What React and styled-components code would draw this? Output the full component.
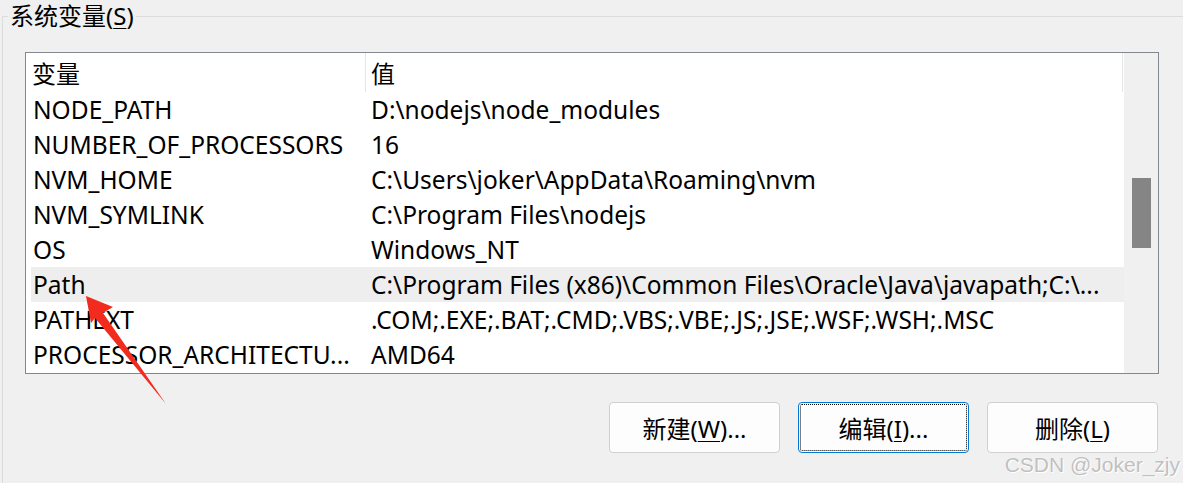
import React from 'react';
import styled, { createGlobalStyle } from 'styled-components';

const GlobalStyle = createGlobalStyle`
  html, body { margin: 0; padding: 0; background: #f0f0f0; }
  body { font-family: "Noto Sans", "Noto Sans CJK SC", sans-serif; color: #000; }
`

const Page = styled.div`
  position: relative;
  width: 1183px;
  height: 483px;
  overflow: hidden;
  background: #f0f0f0;
`

const Group = styled.fieldset`
  margin: 0 0 0 2px;
  padding: 0;
  width: 1300px;
  min-height: 600px;
  border: 1px solid #dcdcdc;
  border-right: none;
  border-bottom: none;
`

const Legend = styled.legend`
  margin-left: 5px;
  padding: 0 2px;
  font-size: 24px;
  line-height: 32px;
`

const Key = styled.span`
  text-decoration: underline;
  text-underline-offset: 3px;
  text-decoration-thickness: 1px;
`

const Content = styled.div`
  margin: 20px 0 0 22px;
  width: 1134px;
`

const ListBox = styled.div`
  box-sizing: border-box;
  width: 1134px;
  height: 322px;
  border: 1px solid #828790;
  background: #fff;
  display: flex;
  overflow: hidden;
`

const Table = styled.div`
  flex: 1;
  display: flex;
  flex-direction: column;
  font-size: 24.5px;
`

const HeaderRow = styled.div`
  display: flex;
  height: 39px;
  flex: none;
  font-size: 24px;
`

const HeadCell = styled.div`
  box-sizing: border-box;
  width: ${p => p.$width}px;
  padding-left: ${p => p.$pad}px;
  border-right: 1px solid #e5e5e5;
  display: flex;
  align-items: center;
  white-space: nowrap;
`

const Row = styled.div`
  display: flex;
  flex: none;
  height: 35px;
  margin-left: 5px;
  background: ${p => (p.$selected ? '#eeeeee' : 'transparent')};
`

const Cell = styled.div`
  box-sizing: border-box;
  width: ${p => (p.$width ? `${p.$width}px` : 'auto')};
  flex: ${p => (p.$width ? 'none' : '1')};
  padding-left: ${p => p.$pad}px;
  display: flex;
  align-items: center;
  white-space: nowrap;
  overflow: hidden;
`

const Track = styled.div`
  width: 34px;
  flex: none;
  background: #f0f0f0;
  display: flex;
  justify-content: center;
`

const Thumb = styled.div`
  width: 19px;
  height: 70px;
  margin-top: 125px;
  background: #858585;
`

const ButtonRow = styled.div`
  display: flex;
  justify-content: flex-end;
  gap: 18px;
  margin-top: 28px;
  padding-right: 1px;
`

const Button = styled.button`
  box-sizing: border-box;
  width: 171px;
  height: 51px;
  padding: 0;
  background: #fdfdfd;
  border: 1px solid ${p => (p.$focused ? '#0078d7' : '#d0d0d0')};
  border-radius: 4px;
  outline: ${p => (p.$focused ? '1px dotted #000' : 'none')};
  outline-offset: -3px;
  font-family: "Noto Sans", "Noto Sans CJK SC", sans-serif;
  font-size: 24px;
  color: #000;
`

const Watermark = styled.div`
  position: absolute;
  right: 3px;
  bottom: 6px;
  font-family: "Liberation Sans", Arial, sans-serif;
  font-size: 21px;
  color: #c0c0c0;
  text-shadow: 0 0 1px #fff, 1px 1px 0 #fff;
  pointer-events: none;
`

const ArrowSvg = styled.svg`
  position: absolute;
  left: 0;
  top: 0;
  pointer-events: none;
`

const rows = [
  ['NODE_PATH', 'D:\\nodejs\\node_modules'],
  ['NUMBER_OF_PROCESSORS', '16'],
  ['NVM_HOME', 'C:\\Users\\joker\\AppData\\Roaming\\nvm'],
  ['NVM_SYMLINK', 'C:\\Program Files\\nodejs'],
  ['OS', 'Windows_NT'],
  ['Path', 'C:\\Program Files (x86)\\Common Files\\Oracle\\Java\\javapath;C:\\...'],
  ['PATHEXT', '.COM;.EXE;.BAT;.CMD;.VBS;.VBE;.JS;.JSE;.WSF;.WSH;.MSC'],
  ['PROCESSOR_ARCHITECTU...', 'AMD64'],
];

const App = () => {
  return (
    <Page>
      <GlobalStyle />
      <Group>
        <Legend>系统变量(<Key>S</Key>)</Legend>
        <Content>
          <ListBox>
            <Table>
              <HeaderRow>
                <HeadCell $width={340} $pad={6}>变量</HeadCell>
                <HeadCell $width={757} $pad={5}>值</HeadCell>
              </HeaderRow>
              {rows.map(([name, value]) => (
                <Row key={name} $selected={name === 'Path'}>
                  <Cell $width={334} $pad={2}>{name}</Cell>
                  <Cell $pad={6}>{value}</Cell>
                </Row>
              ))}
            </Table>
            <Track>
              <Thumb />
            </Track>
          </ListBox>
          <ButtonRow>
            <Button>新建(<Key>W</Key>)...</Button>
            <Button $focused>编辑(<Key>I</Key>)...</Button>
            <Button>删除(<Key>L</Key>)</Button>
          </ButtonRow>
        </Content>
      </Group>
      <ArrowSvg width="200" height="420" viewBox="0 0 200 420">
        <polygon
          points="86,296 113,307 103,313 166,404 95,318 91,323"
          fill="#f22b1f"
        />
      </ArrowSvg>
      <Watermark>CSDN @Joker_zjy</Watermark>
    </Page>
  );
};

export default App;
